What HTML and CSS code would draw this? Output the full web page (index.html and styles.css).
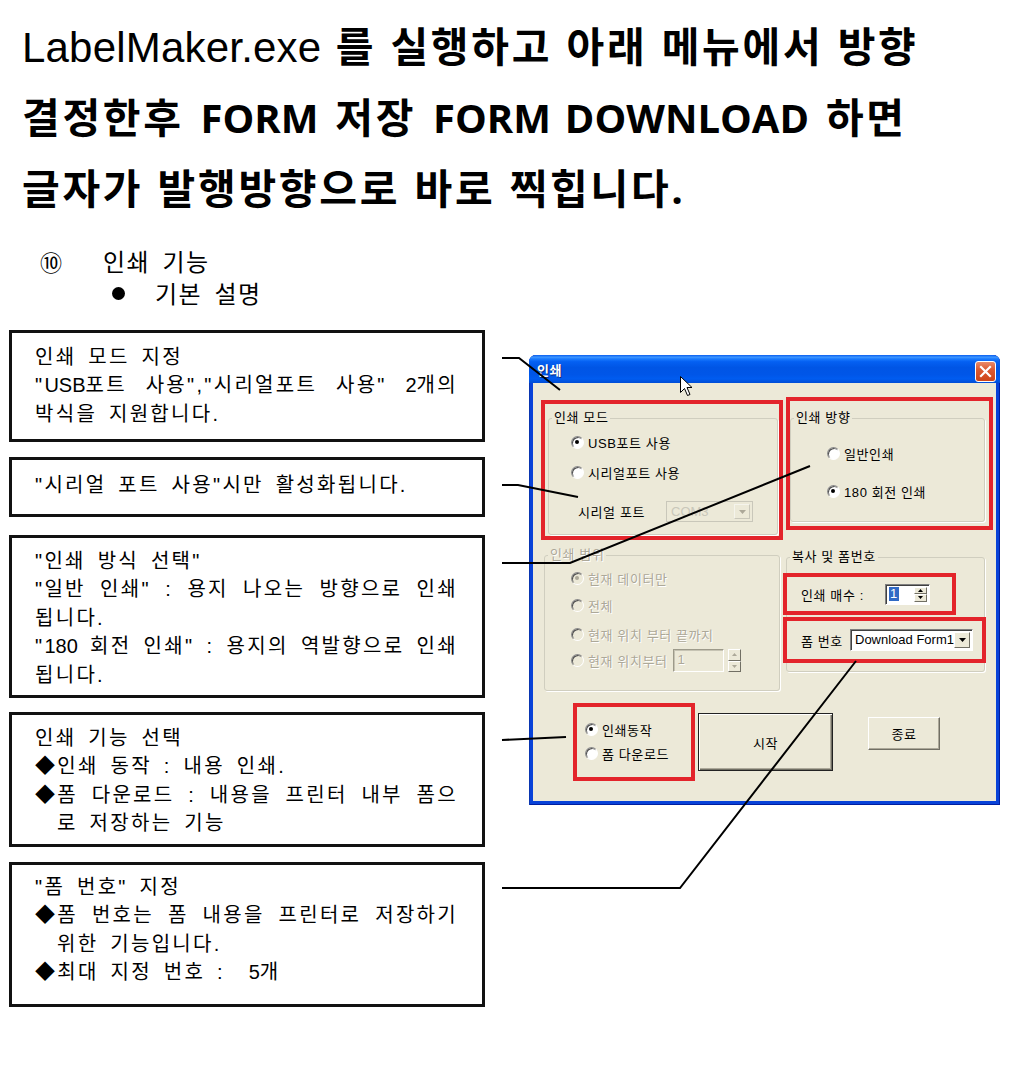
FILE: index.html
```html
<!DOCTYPE html>
<html lang="ko">
<head>
<meta charset="utf-8">
<title>인쇄 기능</title>
<link rel="stylesheet" href="styles.css">
</head>
<body>
<h1 class="title">
  <span class="line"><span class="lm">LabelMaker.exe</span> 를 실행하고 아래 메뉴에서 방향</span>
  <span class="line l2">결정한후 <span class="en">FORM</span> 저장 <span class="en">FORM DOWNLOAD</span> 하면</span>
  <span class="line">글자가 발행방향으로 바로 찍힙니다.</span>
</h1>

<div class="sec">
  <div class="sec-head"><span class="num">⑩</span><span class="sec-text">인쇄 기능</span></div>
  <div class="sec-sub"><span class="dot"></span><span class="sec-text">기본 설명</span></div>
</div>

<div class="content">
  <div class="notes">
    <div class="note n1">
      <p>인쇄 모드 지정</p>
      <p class="j"><span>"<span class="en">USB</span>포트</span><span>사용","시리얼포트</span><span>사용"</span><span><span class="en">2</span>개의</span></p>
      <p>박식을 지원합니다.</p>
    </div>
    <div class="note n2">
      <p>"시리얼 포트 사용"시만 활성화됩니다.</p>
    </div>
    <div class="note n3">
      <p>"인쇄 방식 선택"</p>
      <p class="j"><span>"일반</span><span>인쇄"</span><span>:</span><span>용지</span><span>나오는</span><span>방향으로</span><span>인쇄</span></p>
      <p>됩니다.</p>
      <p class="j"><span>"<span class="en">180</span></span><span>회전</span><span>인쇄"</span><span>:</span><span>용지의</span><span>역발향으로</span><span>인쇄</span></p>
      <p>됩니다.</p>
    </div>
    <div class="note n4">
      <p>인쇄 기능 선택</p>
      <p>◆인쇄 동작 : 내용 인쇄.</p>
      <p class="j"><span>◆폼</span><span>다운로드</span><span>:</span><span>내용을</span><span>프린터</span><span>내부</span><span>폼으</span></p>
      <p class="ind">로 저장하는 기능</p>
    </div>
    <div class="note n5">
      <p>"폼 번호" 지정</p>
      <p class="j"><span>◆폼</span><span>번호는</span><span>폼</span><span>내용을</span><span>프린터로</span><span>저장하기</span></p>
      <p class="ind">위한 기능입니다.</p>
      <p>◆최대 지정 번호 :&nbsp; <span class="en">5</span>개</p>
    </div>
  </div>

  <div class="dialog">
    <div class="titlebar">
      <span class="dlg-title">인쇄</span>
      <span class="close-btn"><svg width="13" height="13" viewBox="0 0 13 13"><path d="M2 2 L11 11 M11 2 L2 11" stroke="#fff" stroke-width="2.2" stroke-linecap="square"/></svg></span>
    </div>
    <div class="dlg-body">
      <div class="drow drow1">
        <div class="red red-mode">
          <fieldset class="grp grp-mode">
            <legend>인쇄 모드</legend>
            <div class="opt m1"><span class="radio on"></span><span>USB포트 사용</span></div>
            <div class="opt m2"><span class="radio"></span><span>시리얼포트 사용</span></div>
            <div class="serial-row">
              <span class="serial-label">시리얼 포트</span>
              <span class="combo combo-dis"><span class="combo-text">COM3</span><span class="combo-btn"><svg width="7" height="4" viewBox="0 0 7 4"><path d="M0 0 H7 L3.5 4 Z" fill="#ACA899"/></svg></span></span>
            </div>
          </fieldset>
        </div>
        <div class="red red-dir">
          <fieldset class="grp grp-dir">
            <legend>인쇄 방향</legend>
            <div class="opt d1"><span class="radio"></span><span>일반인쇄</span></div>
            <div class="opt d2"><span class="radio on"></span><span>180 회전 인쇄</span></div>
          </fieldset>
        </div>
      </div>

      <div class="drow drow2">
        <fieldset class="grp grp-range dis">
          <legend>인쇄 범위</legend>
          <div class="opt g1"><span class="radio on"></span><span>현재 데이터만</span></div>
          <div class="opt g2"><span class="radio"></span><span>전체</span></div>
          <div class="opt g3"><span class="radio"></span><span>현재 위치 부터 끝까지</span></div>
          <div class="opt g4"><span class="radio"></span><span>현재 위치부터</span>
            <span class="num-in">1</span>
            <span class="spin-btns spin-sep"><span class="sb"><svg width="5" height="3" viewBox="0 0 5 3"><path d="M2.5 0 L5 3 H0 Z" fill="#ACA899"/></svg></span><span class="sb"><svg width="5" height="3" viewBox="0 0 5 3"><path d="M0 0 H5 L2.5 3 Z" fill="#ACA899"/></svg></span></span>
          </div>
        </fieldset>
        <fieldset class="grp grp-copy">
          <legend>복사 및 폼번호</legend>
          <div class="red red-cnt">
            <span>인쇄 매수 :</span>
            <span class="spin"><span class="spin-val"><span class="sel">1</span></span><span class="spin-btns"><span class="sb"><svg width="5" height="3" viewBox="0 0 5 3"><path d="M2.5 0 L5 3 H0 Z" fill="#000"/></svg></span><span class="sb"><svg width="5" height="3" viewBox="0 0 5 3"><path d="M0 0 H5 L2.5 3 Z" fill="#000"/></svg></span></span></span>
          </div>
          <div class="red red-form">
            <span>폼 번호</span>
            <span class="combo combo-form"><span class="combo-text">Download Form1</span><span class="combo-btn"><svg width="7" height="4" viewBox="0 0 7 4"><path d="M0 0 H7 L3.5 4 Z" fill="#000"/></svg></span></span>
          </div>
        </fieldset>
      </div>

      <div class="drow drow3">
        <div class="red red-act">
          <div class="opt a1"><span class="radio on"></span><span>인쇄동작</span></div>
          <div class="opt a2"><span class="radio"></span><span>폼 다운로드</span></div>
        </div>
        <div class="btn btn-start">시작</div>
        <div class="btn btn-end">종료</div>
      </div>
    </div>
    <svg class="cursor" width="13" height="21" viewBox="0 0 13 21"><path d="M0.5 0.5 L0.5 16.5 L4.5 12.5 L7.5 19.5 L10 18.5 L7 11.5 L12 11.5 Z" fill="#fff" stroke="#000" stroke-width="1"/></svg>
  </div>
</div>

<svg class="connectors" width="1012" height="1079" viewBox="0 0 1012 1079">
  <g fill="none" stroke="#000" stroke-width="2">
    <polyline points="502,358 519,358 560,390"/>
    <polyline points="502,485 518,485 578,497"/>
    <polyline points="502,563 570,563 810,466"/>
    <polyline points="502,740 566,737"/>
    <polyline points="502,888 680,888 856,661"/>
  </g>
</svg>
</body>
</html>
```

FILE: styles.css
```css
* { box-sizing: border-box; }
html, body { margin: 0; padding: 0; background: #fff; }
body {
  width: 1012px;
  height: 1079px;
  position: relative;
  overflow: hidden;
  font-family: "Liberation Sans", "Noto Sans CJK KR", sans-serif;
  color: #000;
}

/* heading */
.title {
  margin: 0;
  padding: 11px 0 0 22px;
  font-family: "Open Sans", "Noto Sans CJK KR", sans-serif;
  font-weight: 700;
  font-size: 41px;
  line-height: 71px;
  letter-spacing: 2.7px;
  word-spacing: 1px;
}
.title .line { display: block; white-space: nowrap; height: 71px; }
.title .lm {
  font-family: "Liberation Sans", sans-serif;
  font-weight: 400;
  font-size: 42px;
  letter-spacing: 0.2px;
  word-spacing: 0;
}
.title .en { font-size: 40px; letter-spacing: 0; word-spacing: 0; }
.title .l2, .title .l2 .en { word-spacing: 3.5px; }

/* section */
.sec {
  margin-top: 21px;
  font-family: "Noto Sans CJK KR", sans-serif;
  font-size: 24px;
  line-height: 32px;
}
.sec-text { letter-spacing: 1.5px; word-spacing: 4px; }
.sec-head { display: flex; padding-left: 40px; }
.num { width: 63px; font-size: 22px; }
.sec-sub { display: flex; align-items: center; padding-left: 112px; }
.dot { width: 13px; height: 13px; border-radius: 50%; background: #000; margin-right: 30px; }

/* content */
.content { display: flex; align-items: flex-start; margin-top: 21px; }
.notes { margin-left: 9px; width: 476px; flex: none; }
.note {
  border: 3px solid #111;
  padding: 9px 24px 0 23px;
  font-size: 20px;
  line-height: 28.4px;
  letter-spacing: 2.3px;
  word-spacing: 4px;
}
.note .en { letter-spacing: 0; }
.note p { margin: 0; white-space: nowrap; }
.note p.j { display: flex; justify-content: space-between; }
.note p.ind { padding-left: 22px; }
.n1 { height: 112px; padding-top: 10px; }
.n2 { height: 60px; margin-top: 15px; padding-top: 11px; }
.n3 { height: 163px; margin-top: 18px; }
.n4 { height: 135px; margin-top: 14px; }
.n5 { height: 145px; margin-top: 15px; padding-top: 8px; }

/* dialog */
.dialog {
  position: relative;
  flex: none;
  width: 471px;
  height: 450px;
  margin-top: 25px;
  margin-left: 44px;
  background: #0842D8;
  border-radius: 7px 7px 0 0;
  display: flex;
  flex-direction: column;
  font-size: 13px;
  letter-spacing: 0.6px;
  box-shadow: inset 1px 0 0 #0A36B0, inset -1px 0 0 #001EA0, inset 0 -1px 0 #001EA0;
}
.titlebar {
  height: 28px;
  flex: none;
  display: flex;
  align-items: center;
  border-radius: 7px 7px 0 0;
  background: linear-gradient(to bottom, #0A5FEF 0%, #3D95FF 8%, #1A7BFF 14%, #0460F2 24%, #0055E5 45%, #0056E8 70%, #005CF0 85%, #004DD6 100%);
}
.dlg-title {
  margin-left: 8px;
  color: #fff;
  font-family: "Noto Sans CJK KR", sans-serif;
  font-weight: 700;
  font-size: 13px;
  text-shadow: 1px 1px 0 #0A2A80;
}
.close-btn {
  margin-left: auto;
  margin-right: 4px;
  margin-top: 5px;
  width: 21px;
  height: 21px;
  border: 1px solid #fff;
  border-radius: 3px;
  background: linear-gradient(to bottom, #E98A6A 0%, #DC5A32 40%, #CE4418 100%);
  display: flex;
  align-items: center;
  justify-content: center;
}
.dlg-body {
  flex: 1;
  margin: 0 4px 4px;
  background: #ECE9D8;
  display: flex;
  flex-direction: column;
}
.cursor { position: absolute; left: 151px; top: 21px; }

.drow { display: flex; align-items: flex-start; flex: none; }
.drow1 { margin-top: 14px; }

.red { border: 4px solid #E3242B; flex: none; }

.grp {
  margin: 0;
  padding: 0;
  min-width: 0;
  border: 1px solid #D0CEBF;
  border-radius: 3px;
  box-shadow: 1px 1px 0 #fff;
  flex: none;
}
.grp legend {
  padding: 0 2px;
  margin-left: 3px;
  font-size: 13px;
  line-height: 16px;
}

.opt { display: flex; align-items: center; height: 16px; white-space: nowrap; }
.radio {
  width: 13px;
  height: 13px;
  border-radius: 50%;
  background: #fff;
  border: 1px solid;
  border-color: #8A8A8A #fff #fff #8A8A8A;
  box-shadow: inset 1px 1px 0 #505050;
  margin-right: 4px;
  position: relative;
  flex: none;
}
.radio.on::after {
  content: "";
  position: absolute;
  left: 3px;
  top: 3px;
  width: 4px;
  height: 4px;
  border-radius: 50%;
  background: #000;
}

/* mode group */
.red-mode { margin-left: 8px; margin-top: 3px; width: 242px; height: 140px; }
.grp-mode { margin: 6px 0 0 3px; width: 230px; height: 125px; }
.m1 { margin: 8px 0 0 22px; }
.m2 { margin: 14px 0 0 22px; }
.serial-row { display: flex; align-items: center; height: 21px; margin: 21px 0 0 29px; white-space: nowrap; }
.serial-row .combo { margin-left: auto; margin-right: 24px; width: 87px; height: 21px; }

/* direction group */
.red-dir { margin-left: 3px; width: 207px; height: 133px; }
.grp-dir { margin-top: 9px; width: 195px; height: 112px; }
.d1 { margin: 19px 0 0 36px; }
.d2 { margin: 22px 0 0 36px; }

/* range group */
.grp-range { margin: 7px 0 0 11px; width: 236px; height: 144px; }
.dis, .dis legend { color: #ACA899; text-shadow: 1px 1px 0 #fff; }
.dis .radio { background: #ECE9D8; }
.dis .radio.on::after { background: #ACA899; }
.g1 { margin: 7px 0 0 26px; }
.g2 { margin: 11px 0 0 26px; }
.g3 { margin: 13px 0 0 26px; }
.g4 { margin: 7px 0 0 26px; height: 23px; }
.num-in {
  margin-left: 5px;
  width: 51px;
  height: 23px;
  border: 1px solid;
  border-color: #9D9A8A #fff #fff #9D9A8A;
  box-shadow: inset 1px 1px 0 #C6C3B3;
  padding-left: 4px;
  line-height: 20px;
  font-family: "Liberation Sans", sans-serif;
}
.spin-sep { margin-left: 4px; width: 19px; height: 23px; }

/* copy group */
.grp-copy { margin: 9px 0 0 6px; width: 199px; height: 123px; }
.red-cnt {
  margin: 8px 0 0 -4px;
  width: 173px;
  height: 42px;
  display: flex;
  align-items: center;
  padding-left: 14px;
  white-space: nowrap;
}
.red-form {
  margin: 2px 0 0 -4px;
  width: 203px;
  height: 46px;
  display: flex;
  align-items: center;
  padding-left: 14px;
  white-space: nowrap;
}
.spin {
  margin-left: auto;
  margin-right: 22px;
  width: 45px;
  height: 21px;
  display: flex;
  background: #fff;
  border: 1px solid;
  border-color: #7F7F7F #fff #fff #7F7F7F;
  box-shadow: inset 1px 1px 0 #404040;
  padding: 2px;
}
.spin-val { flex: 1; display: flex; align-items: center; padding-left: 1px; font-family: "Liberation Sans", sans-serif; }
.sel { background: #316AC5; color: #fff; padding: 0 1px; line-height: 14px; }
.spin-btns { display: flex; flex-direction: column; width: 13px; flex: none; }
.sb {
  flex: 1;
  background: #ECE9D8;
  border: 1px solid;
  border-color: #fff #716F64 #716F64 #fff;
  display: flex;
  align-items: center;
  justify-content: center;
}

.combo {
  display: flex;
  background: #fff;
  border: 1px solid;
  border-color: #7F7F7F #fff #fff #7F7F7F;
  box-shadow: inset 1px 1px 0 #404040;
  padding: 2px;
  flex: none;
}
.combo-text {
  flex: 1;
  font-family: "Liberation Sans", sans-serif;
  font-size: 13px;
  line-height: 16px;
  padding-left: 2px;
  letter-spacing: 0;
  overflow: hidden;
  white-space: nowrap;
}
.combo-btn {
  width: 16px;
  flex: none;
  background: #ECE9D8;
  border: 1px solid;
  border-color: #fff #716F64 #716F64 #fff;
  display: flex;
  align-items: center;
  justify-content: center;
}
.combo-dis { background: #ECE9D8; border-color: #C9C7BA; box-shadow: none; }
.combo-dis .combo-text { color: #C9C7BA; }
.combo-dis .combo-btn { border-color: #F5F4EC #C9C7BA #C9C7BA #F5F4EC; }
.combo-form { margin-left: auto; margin-right: 9px; width: 123px; height: 22px; }

/* action row */
.red-act { margin: 12px 0 0 40px; width: 122px; height: 78px; }
.a1 { margin: 14px 0 0 8px; }
.a2 { margin: 8px 0 0 8px; }
.btn {
  flex: none;
  display: flex;
  align-items: center;
  justify-content: center;
  background: #ECE9D8;
  font-family: "Noto Sans CJK KR", sans-serif;
  font-size: 13px;
}
.btn-start {
  margin: 22px 0 0 3px;
  width: 135px;
  height: 58px;
  border: 1px solid #222;
  box-shadow: inset 1px 1px 0 #fff, inset -1px -1px 0 #716F64, inset -2px -2px 0 #ACA899;
}
.btn-end {
  margin: 26px 0 0 35px;
  width: 72px;
  height: 33px;
  border: 1px solid;
  border-color: #fff #716F64 #716F64 #fff;
  box-shadow: inset -1px -1px 0 #ACA899;
}

.connectors { position: absolute; left: 0; top: 0; pointer-events: none; }
```
